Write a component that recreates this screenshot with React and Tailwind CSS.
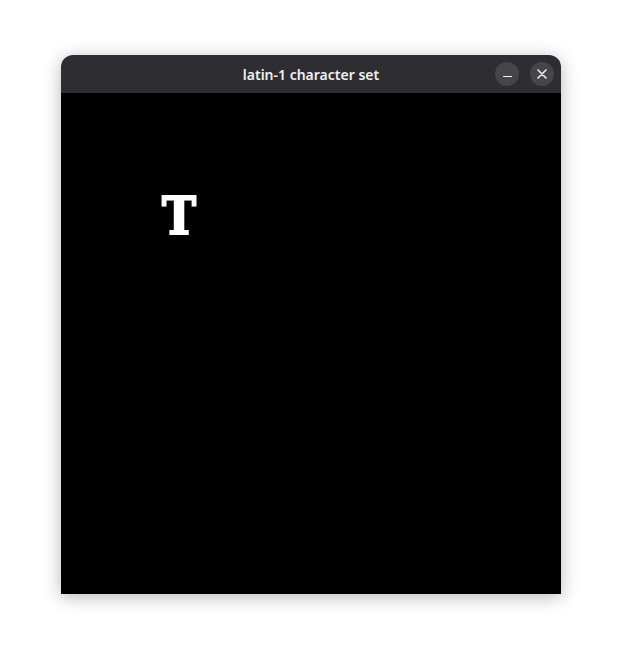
export default function App() {
  return (
    <div className="w-[622px] h-[661px] bg-white pt-[55px] pl-[61px]">
      <div className="w-[500px] flex flex-col rounded-t-[12px] shadow-[0_3px_18px_rgba(0,0,0,0.28)]">
        <div className="h-[38px] bg-[#2e2e32] rounded-t-[12px] flex items-center relative">
          <div className="flex-1 text-center text-[14px] font-semibold text-[#f0f0f0] font-['Noto_Sans',sans-serif]">
            latin-1 character set
          </div>
          <div className="absolute right-[7px] top-[7px] flex gap-[11px]">
            <div className="w-[24px] h-[24px] rounded-full bg-[#45454a] flex items-center justify-center">
              <div className="w-[9px] h-[1.5px] bg-[#f0f0f0] mt-[5px]" />
            </div>
            <div className="w-[24px] h-[24px] rounded-full bg-[#45454a] flex items-center justify-center">
              <svg width="10" height="10" viewBox="0 0 10 10">
                <path d="M1 1 L9 9 M9 1 L1 9" stroke="#f0f0f0" strokeWidth="1.6" strokeLinecap="round" />
              </svg>
            </div>
          </div>
        </div>
        <div className="h-[501px] bg-black pl-[101px] pt-[97px]">
          <div className="inline-block origin-left scale-x-[0.88] text-white font-['DejaVu_Serif',serif] font-bold text-[52px] leading-none [-webkit-text-stroke:2px_white]">T</div>
        </div>
      </div>
    </div>
  );
}
